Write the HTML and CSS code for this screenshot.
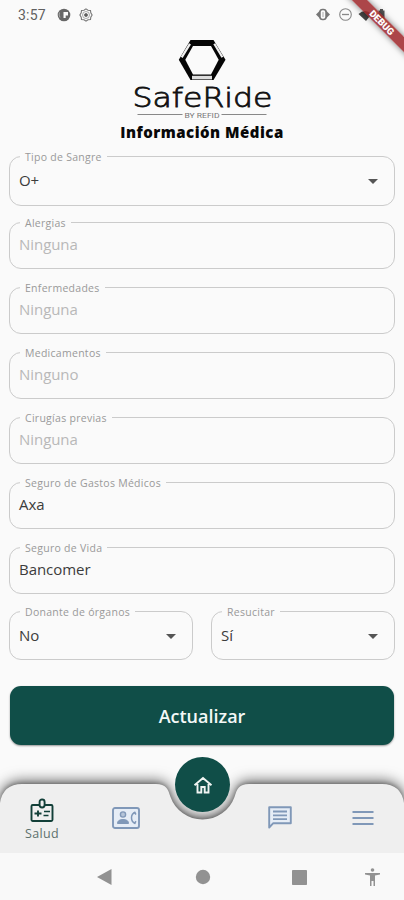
FILE: index.html
```html
<!DOCTYPE html>
<html lang="es">
<head>
<meta charset="utf-8">
<title>SafeRide</title>
<link rel="stylesheet" href="styles.css">
</head>
<body>
<div class="screen">
  <header class="status">
    <span class="time">3:57</span>
    <svg class="st-icon" width="14" height="14" viewBox="0 0 14 14"><circle cx="7" cy="7" r="6.300" fill="#666"/><path d="M6.500 4H11V7.500H8.700V10H6.500z" fill="#fafafa"/><path d="M2.500 4.500Q1.500 7 3 9.500" fill="none" stroke="#aaa"/></svg>
    <svg class="st-icon gear" width="14" height="14" viewBox="0 0 14 14" fill="none" stroke="#777"><path d="M7 .9 9 2.3l2.500.2.3 2.400L13.100 7l-1.300 2.100-.3 2.400L9 11.700 7 13.100 5 11.700l-2.500-.2-.3-2.400L.9 7l1.300-2.100.3-2.400L5 2.300Z" stroke-width="1.100"/><circle cx="7" cy="7" r="3.500" stroke-width=".6"/><circle cx="7" cy="7" r="1.500" fill="#555"/></svg>
    <span class="grow"></span>
    <svg class="st-right" width="72" height="16" viewBox="0 0 72 16"><path d="M5 3.500 1 7.500l4 4zM11 3.500l4 4-4 4z" fill="#777"/><rect x="5" y="2.500" width="6" height="10" rx="2.500" fill="#fafafa" stroke="#777" stroke-width="1.500"/><path d="M8 5v5" stroke="#aaa"/><circle cx="30.500" cy="7.500" r="5.800" fill="none" stroke="#888" stroke-width="1.100"/><path d="M27 7.500h7" stroke="#888" stroke-width="1.300"/><path d="M43.500 7q6.500-6 13 0L51 14z" fill="#444"/><path d="M65 2h3v1.500h1.500V13h-6V3.500H65z" fill="#555"/></svg>
  </header>
  <div class="debug-corner"><div class="debug">DEBUG</div></div>

  <svg class="logo" width="150" height="84" viewBox="0 0 150 84">
    <path d="M63.500 1h23L98.500 20.800 86.500 41h-23L51.800 20.800z" fill="#050505"/>
    <path d="M66 7h18l7.700 13.800L84 35.500H66l-7.700-14.700z" fill="#fafafa"/>
    <path d="M54.700 18.300 63 4.800M87.300 4.800 95.400 18.300" stroke="#f0f0f0" stroke-width="2.200" fill="none"/>
    <path d="M65 38.600h20" stroke="#ddd" stroke-width="3.600"/>
    <text class="word" x="5.500" y="67.500" textLength="140" lengthAdjust="spacingAndGlyphs">SafeRide</text>
    <path d="M10.500 75.500h45M94.500 75.500h45" stroke="#888"/>
    <text class="byline" x="57.500" y="78.500" textLength="35" lengthAdjust="spacingAndGlyphs">BY REFID</text>
  </svg>
  <h1>Información Médica</h1>

  <main class="form">
    <div class="field tall first"><label>Tipo de Sangre</label><span class="value">O+</span><i class="arrow"></i></div>
    <div class="fields">
      <div class="field"><label>Alergias</label><span class="value hint">Ninguna</span></div>
      <div class="field"><label>Enfermedades</label><span class="value hint">Ninguna</span></div>
      <div class="field"><label>Medicamentos</label><span class="value hint">Ninguno</span></div>
      <div class="field"><label>Cirugías previas</label><span class="value hint">Ninguna</span></div>
      <div class="field"><label>Seguro de Gastos Médicos</label><span class="value">Axa</span></div>
      <div class="field"><label>Seguro de Vida</label><span class="value">Bancomer</span></div>
    </div>
    <div class="pair">
      <div class="field tall"><label>Donante de órganos</label><span class="value">No</span><i class="arrow"></i></div>
      <div class="field tall"><label>Resucitar</label><span class="value">Sí</span><i class="arrow"></i></div>
    </div>
    <button class="submit">Actualizar</button>
  </main>

  <nav class="tabs">
    <svg class="tabs-bg" width="404" height="113" viewBox="0 740 404 113">
      <path d="M0 853V803Q3 784 22 784H156C166 784 168 789 170.500 797A34 34 0 0 0 234.500 797C237 789 239 784 249 784H382Q401 784 404 803V853Z" fill="#efefef"/>
    </svg>
    <div class="tab active"><svg width="24" height="25" viewBox="0 0 24 25" fill="none" stroke="#123f38" stroke-width="1.900"><rect x="1.500" y="7" width="21" height="16" rx="1.200"/><rect x="9.600" y="1.500" width="5" height="8" rx="2.400" fill="#efefef"/><path d="M4.500 15.500h7M8 12.500v6"/><path d="M14 13.500h6M13.500 17.500h5" stroke-width="1.300"/></svg><span>Salud</span></div>
    <div class="tab"><svg width="28" height="22" viewBox="0 0 28 22"><rect x="1" y="1" width="26" height="20" rx="2" fill="#e6edf6" stroke="#8098b8" stroke-width="1.900"/><circle cx="11" cy="7.500" r="2.600" fill="#b5c4d8" stroke="#8098b8" stroke-width="1.400"/><path d="M5.500 16.500q0-4 5.500-4t5.500 4z" fill="#8098b8" stroke="#8098b8"/><path d="M23.500 5.200q-4 1-4 5.600t4 5.600" fill="none" stroke="#8098b8" stroke-width="1.500"/><path d="m22.200 5 1.800 2.500M22.200 16.700l1.800-2.500" stroke="#8098b8" stroke-width="1.500"/></svg></div>
    <div class="home"><svg width="20" height="18" viewBox="0 0 20 18" fill="none" stroke="#f1f5f3" stroke-width="1.900"><path d="M1.500 9.300 10 2l8.500 7.300M4.500 8v8.500h3.800V11h3.400v5.500h3.800V8"/></svg></div>
    <div class="tab"><svg width="24" height="23" viewBox="0 0 24 23"><path d="M1.200 21.500V1.200h21.600v16H5.300z" fill="#e6edf6" stroke="#8098b8" stroke-width="1.900" stroke-linejoin="round"/><path d="M5 5.500h14M5 9.300h14M5 13.100h14" stroke="#8098b8" stroke-width="1.800"/></svg></div>
    <div class="tab"><svg class="menu" width="22" height="16" viewBox="0 0 22 16"><path d="M.5 2h21M.5 8h21M.5 14h21" stroke="#8098b8" stroke-width="1.900"/></svg></div>
  </nav>
  <footer class="system">
    <svg width="404" height="47" viewBox="0 853 404 47" fill="#929292"><path d="M97 877 111.500 869v16z"/><circle cx="203" cy="877" r="7.200"/><rect x="292" y="870" width="15" height="15" rx=".8"/><circle cx="372.500" cy="870" r="1.800"/><path d="M365 873h15v1.600l-5 1V886h-1.500v-5h-2v5H370v-10.400l-5-1z"/></svg>
  </footer>
</div>
</body>
</html>
```
FILE: styles.css
```css
* { box-sizing: border-box; }
body { margin: 0; background: #fafafa; font-family: "Open Sans", "Noto Sans", sans-serif; }
.screen { position: relative; width: 404px; height: 900px; overflow: hidden; display: flex; flex-direction: column; background: #fafafa; }
.status { height: 30px; flex: none; display: flex; align-items: center; padding: 0 17px 0 18px; }
.time { width: 39px; font: 400 14px Roboto, sans-serif; color: #606060; letter-spacing: .2px; }
.gear { margin-left: 8px; }
.grow { flex: 1; }
.debug-corner { position: absolute; right: 0; top: 0; width: 80px; height: 80px; overflow: hidden; }
.debug { position: absolute; left: 3px; top: 17px; width: 110px; height: 11px; transform: rotate(45deg); background: rgba(158, 40, 43, .86); color: #fff; font: 900 9.500px/11px Roboto, sans-serif; text-align: center; box-shadow: 0 0 6px rgba(0, 0, 0, .5); }
.logo { flex: none; margin: 9px auto 0; }
.word { font: 200 27px "DejaVu Sans", sans-serif; fill: #111; stroke: #111; stroke-width: .8px; }
.byline { font: 7px Roboto, sans-serif; fill: #777; }
h1 { margin: -1px 0 0; height: 20px; text-align: center; font: 800 15px/20px "Open Sans", sans-serif; color: #080808; letter-spacing: .5px; }
.form { margin: 14px 9px 0; display: flex; flex-direction: column; }
.fields { display: flex; flex-direction: column; gap: 18px; margin: 16px 0 17px; }
.field { position: relative; height: 47px; border: 1px solid #cbcbcb; border-radius: 12px; display: flex; padding: 10px 16px 0 9px; }
.field.tall { height: 49px; padding-top: 12px; }
.field.tall.first { height: 50px; }
.field label { position: absolute; left: 10px; top: -7px; padding: 0 5px; height: 14px; background: #fafafa; font-size: 10.500px; line-height: 14px; letter-spacing: .28px; color: #999; white-space: nowrap; }
.value { flex: 1; font-size: 15px; line-height: 22px; letter-spacing: -.05px; color: #3c3c3c; }
.hint { color: #b8b8b8; }
.arrow { margin-top: 10px; width: 0; height: 0; border: 5px solid transparent; border-top-color: #555; border-bottom: 0; }
.pair { display: grid; grid-template-columns: 1fr 1fr; gap: 18px; }
.submit { margin: 26px 1px 0; height: 59px; border: 0; border-radius: 11px; background: #104e48; color: #f4f8f7; font: 600 18px "Open Sans", sans-serif; box-shadow: 0 1px 2px rgba(0, 0, 0, .4); }
.tabs { position: absolute; left: 0; bottom: 47px; width: 404px; height: 69px; display: grid; grid-template-columns: 84px 83px 71px 83px 83px; align-items: center; justify-items: center; }
.tabs-bg { position: absolute; left: 0; bottom: 0; overflow: visible; filter: drop-shadow(0 -1px 2px rgba(0, 0, 0, .25)) drop-shadow(0 -2px 7px rgba(0, 0, 0, .65)); }
.tab { position: relative; top: -1px; display: flex; flex-direction: column; align-items: center; }
.tab.active { top: 1px; }
.tab span { margin-top: 3px; font-size: 12.500px; line-height: 16px; letter-spacing: .3px; color: #5d716d; }
.home { position: relative; align-self: start; margin-top: -27px; width: 55px; height: 55px; border-radius: 50%; background: #104e48; display: flex; align-items: center; justify-content: center; }
.system { position: absolute; left: 0; bottom: 0; width: 404px; height: 47px; background: #f9f9f9; }
.system svg { display: block; }
```
